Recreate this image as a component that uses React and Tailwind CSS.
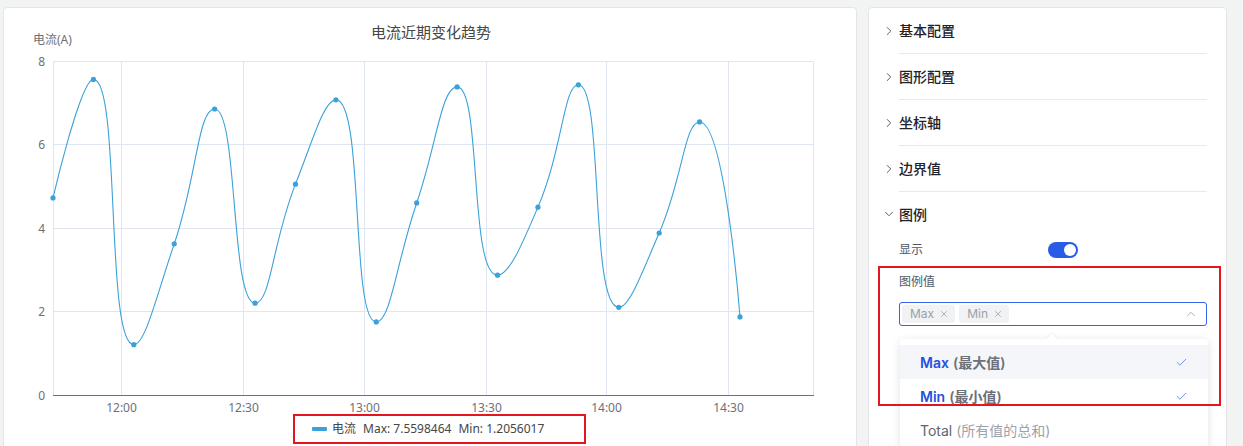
import React from "react";
import { ChevronRight, ChevronDown, ChevronUp, Check, X } from "lucide-react";

const VALUES = [4.72, 7.5598464, 1.2056017, 3.62, 6.85, 2.2, 5.05, 7.07, 1.75, 4.6, 7.38, 2.87, 4.5, 7.43, 2.1, 3.88, 6.54, 1.87];
const X0 = 53, X1 = 813, Y0 = 61, YB = 395;
const UNIT = (YB - Y0) / 8;
const STEP = (740 - 53) / 17;
const PTS = VALUES.map((v, i) => [X0 + i * STEP, YB - v * UNIT]);

function smoothPath(pts, smooth = 0.5) {
  let d = "";
  let cpx0 = 0, cpy0 = 0, prevX = 0, prevY = 0;
  for (let i = 0; i < pts.length; i++) {
    const [x, y] = pts[i];
    if (i === 0) {
      d += `M${x.toFixed(2)},${y.toFixed(2)}`;
      cpx0 = x; cpy0 = y;
    } else {
      let nextX, nextY;
      if (i + 1 < pts.length) { nextX = pts[i + 1][0]; nextY = pts[i + 1][1]; }
      else { nextX = x; nextY = y; }
      let cpx1, cpy1, nextCpx0, nextCpy0;
      if (i + 1 >= pts.length) {
        cpx1 = x; cpy1 = y; nextCpx0 = x; nextCpy0 = y;
      } else {
        let vx = nextX - prevX, vy = nextY - prevY;
        const dx0 = x - prevX, dy0 = y - prevY, dx1 = nextX - x, dy1 = nextY - y;
        const lenPrev = Math.sqrt(dx0 * dx0 + dy0 * dy0);
        const lenNext = Math.sqrt(dx1 * dx1 + dy1 * dy1);
        const ratio = lenNext / (lenNext + lenPrev);
        nextCpx0 = x + vx * smooth * ratio;
        nextCpy0 = y + vy * smooth * ratio;
        nextCpx0 = Math.min(nextCpx0, Math.max(nextX, x));
        nextCpy0 = Math.min(nextCpy0, Math.max(nextY, y));
        nextCpx0 = Math.max(nextCpx0, Math.min(nextX, x));
        nextCpy0 = Math.max(nextCpy0, Math.min(nextY, y));
        vx = nextCpx0 - x; vy = nextCpy0 - y;
        cpx1 = x - vx * lenPrev / lenNext;
        cpy1 = y - vy * lenPrev / lenNext;
        cpx1 = Math.min(cpx1, Math.max(prevX, x));
        cpy1 = Math.min(cpy1, Math.max(prevY, y));
        cpx1 = Math.max(cpx1, Math.min(prevX, x));
        cpy1 = Math.max(cpy1, Math.min(prevY, y));
        vx = x - cpx1; vy = y - cpy1;
        nextCpx0 = x + vx * lenNext / lenPrev;
        nextCpy0 = y + vy * lenNext / lenPrev;
      }
      d += `C${cpx0.toFixed(2)},${cpy0.toFixed(2)} ${cpx1.toFixed(2)},${cpy1.toFixed(2)} ${x.toFixed(2)},${y.toFixed(2)}`;
      cpx0 = nextCpx0; cpy0 = nextCpy0;
    }
    prevX = x; prevY = y;
  }
  return d;
}

const LINE = "#3ba1da";
const AXIS_TXT = "#6e7079";
const GRID = "#e0e6f1";
const XT = [[121, "12:00"], [243, "12:30"], [364, "13:00"], [486, "13:30"], [606, "14:00"], [728, "14:30"]];
const YT = [[395, "0"], [311, "2"], [228, "4"], [144, "6"], [61, "8"]];

function Chart() {
  return (
    <svg width="852" height="406" className="block overflow-visible" style={{ fontFamily: '"Noto Sans", "Noto Sans CJK SC", sans-serif' }}>
      <g transform="translate(-4,-8)">
        <text x="431" y="38" textAnchor="middle" fontSize="15" fill="#464646">电流近期变化趋势</text>
        <text x="33" y="43.5" fontSize="12" fill={AXIS_TXT}>电流(A)</text>
        {YT.map(([y, t]) => (
          <g key={t}>
            {y !== YB && <line x1={X0} x2={X1} y1={y + 0.5} y2={y + 0.5} stroke={GRID} strokeWidth="1" />}
            <text x="45" y={y + 4.5} textAnchor="end" fontSize="12" fill={AXIS_TXT}>{t}</text>
          </g>
        ))}
        {[X0, ...XT.map((t) => t[0]), X1].map((x, i) => (
          <line key={i} x1={x + 0.5} x2={x + 0.5} y1={Y0} y2={YB} stroke={GRID} strokeWidth="1" />
        ))}
        <line x1={X0} x2={X1 + 1} y1={YB + 0.5} y2={YB + 0.5} stroke={AXIS_TXT} strokeWidth="1" />
        {XT.map(([x, t]) => (
          <text key={t} x={x + 0.5} y="412" textAnchor="middle" fontSize="12" fill={AXIS_TXT}>{t}</text>
        ))}
        <path d={smoothPath(PTS)} fill="none" stroke={LINE} strokeWidth="1.1" />
        {PTS.map(([x, y], i) => (
          <circle key={i} cx={x} cy={y} r="2.6" fill={LINE} />
        ))}
      </g>
    </svg>
  );
}

function AccRow({ title, open = false, border = true, h = "h-[46px]" }) {
  return (
    <div className={`${h} flex items-center ${border ? "border-b border-[#e8e9ec]" : ""}`}>
      <span className="-ml-[17px] mr-[3px] text-[#50555d] flex items-center">
        {open ? <ChevronDown size={14} strokeWidth={1.6} /> : <ChevronRight size={14} strokeWidth={1.6} />}
      </span>
      <span className="text-[14px] text-[#1f2329] font-medium">{title}</span>
    </div>
  );
}

function Tag({ children }) {
  return (
    <div className="h-[18px] pl-[8px] pr-[6px] bg-[#f1f2f4] rounded-[3px] text-[12px] text-[#9ba0a8] flex items-center gap-[5px]">
      <span>{children}</span>
      <X size={10} strokeWidth={1.6} className="text-[#8f949c]" />
    </div>
  );
}

export default function App() {
  return (
    <div
      className="w-[1243px] h-[446px] overflow-hidden bg-[#f2f3f3] flex pl-[3px] pt-[7px] gap-[11px]"
      style={{ fontFamily: 'Inter, "Noto Sans CJK SC", sans-serif' }}
    >
      <div className="w-[854px] h-[470px] shrink-0 bg-white border border-[#e3e5e7] rounded-[4px]">
        <Chart />
        <div
          className="ml-[289px] w-[293px] h-[30px] border-2 border-[#e3151e] flex items-center pl-[17px] text-[12px] text-[#464646]"
          style={{ fontFamily: '"Noto Sans", "Noto Sans CJK SC", sans-serif' }}
        >
          <span className="w-[15px] h-[4px] rounded-[1px] bg-[#3ba1da] mr-[5px]" />
          <span>电流</span>
          <span className="ml-[7px]">Max: 7.5598464</span>
          <span className="ml-[7px]">Min: 1.2056017</span>
        </div>
      </div>

      <div className="w-[359px] h-[470px] shrink-0 bg-white border border-[#e3e5e7] rounded-[4px] pl-[30px] pr-[19px] relative">
        <AccRow title="基本配置" />
        <AccRow title="图形配置" />
        <AccRow title="坐标轴" />
        <AccRow title="边界值" />
        <AccRow title="图例" open border={false} h="h-[44px]" />

        <div className="h-[28px] flex items-center">
          <span className="w-[149px] text-[12px] text-[#4e5969]">显示</span>
          <div className="w-[30px] h-[16px] rounded-full bg-[#2a5be8] relative">
            <span className="absolute right-[2px] top-[2px] w-[12px] h-[12px] rounded-full bg-white" />
          </div>
        </div>

        <div className="mt-[9px] text-[12px] leading-[18px] text-[#4e5969]">图例值</div>

        <div className="mt-[11px] relative">
          <div className="h-[24px] border border-[#3662ec] rounded-[3px] flex items-center pl-[2px] pr-[8px] gap-[4px]">
            <Tag>Max</Tag>
            <Tag>Min</Tag>
            <span className="ml-auto text-[#9aa0a8] flex items-center">
              <ChevronUp size={14} strokeWidth={1.4} />
            </span>
          </div>

          <div className="absolute left-[1px] top-[37px] w-[308px] bg-white rounded-[4px] shadow-[0_2px_10px_rgba(0,0,0,0.12)] pt-[6px] z-10">
            <span className="absolute left-[148px] -top-[4px] w-[8px] h-[8px] bg-white rotate-45 shadow-[-1px_-1px_2px_rgba(0,0,0,0.06)]" />
            <div className="relative h-[34px] flex items-center px-[20px] bg-[#f5f6fa] text-[14px] font-semibold">
              <span className="text-[#2451e0]">Max</span>
              <span className="ml-[4px] text-[#6b7079]">(最大值)</span>
              <Check size={13} strokeWidth={1.6} className="ml-auto text-[#5b80f0]" />
            </div>
            <div className="h-[34px] flex items-center px-[20px] text-[14px] font-semibold">
              <span className="text-[#2451e0]">Min</span>
              <span className="ml-[4px] text-[#6b7079]">(最小值)</span>
              <Check size={13} strokeWidth={1.6} className="ml-auto text-[#5b80f0]" />
            </div>
            <div className="h-[34px] flex items-center px-[20px] text-[14px]">
              <span className="text-[#5f6470]">Total</span>
              <span className="ml-[4px] text-[#9ca1aa]">(所有值的总和)</span>
            </div>
          </div>
        </div>

        <div className="absolute left-[9px] top-[258px] w-[343px] h-[140px] border-2 border-[#e3151e] z-20 pointer-events-none" />
      </div>
    </div>
  );
}
